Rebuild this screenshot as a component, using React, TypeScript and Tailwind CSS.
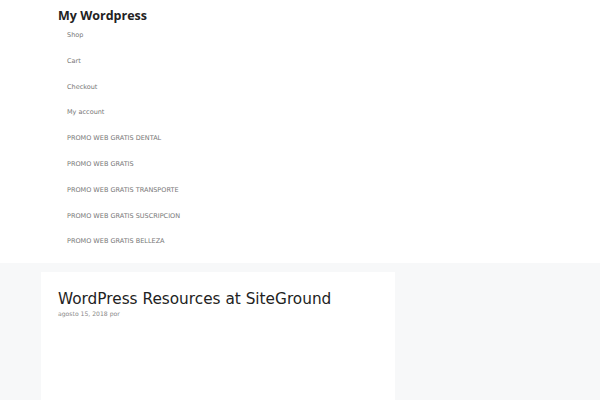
import React from "react";

const items = [
  "Shop",
  "Cart",
  "Checkout",
  "My account",
  "PROMO WEB GRATIS DENTAL",
  "PROMO WEB GRATIS",
  "PROMO WEB GRATIS TRANSPORTE",
  "PROMO WEB GRATIS SUSCRIPCION",
  "PROMO WEB GRATIS BELLEZA",
];

export default function App() {
  return (
    <div className="w-[600px] h-[400px] overflow-hidden bg-[#f7f8f9]" style={{ fontFamily: '"DejaVu Sans", sans-serif' }}>
      <header className="bg-white h-[263px] pl-[58px] pt-[8px]">
        <div className="text-[12.5px] font-bold text-[#222] leading-[16px]" style={{ fontFamily: '"Open Sans", sans-serif' }}>My Wordpress</div>
        <ul className="pl-[9px] pt-[6px]">
          {items.map((t) => (
            <li key={t} className="h-[25.8px] text-[6.5px] text-[#777] leading-[10px]">
              {t}
            </li>
          ))}
        </ul>
      </header>
      <main className="pt-[9px] pl-[41px]">
        <article className="w-[354px] h-[200px] bg-white pl-[17px] pt-[16px]">
          <h1 className="text-[15.3px] text-[#222] leading-[22px]">WordPress Resources at SiteGround</h1>
          <div className="text-[6.1px] text-[#888] leading-[10px] -mt-[1px]">agosto 15, 2018 por</div>
        </article>
      </main>
    </div>
  );
}
